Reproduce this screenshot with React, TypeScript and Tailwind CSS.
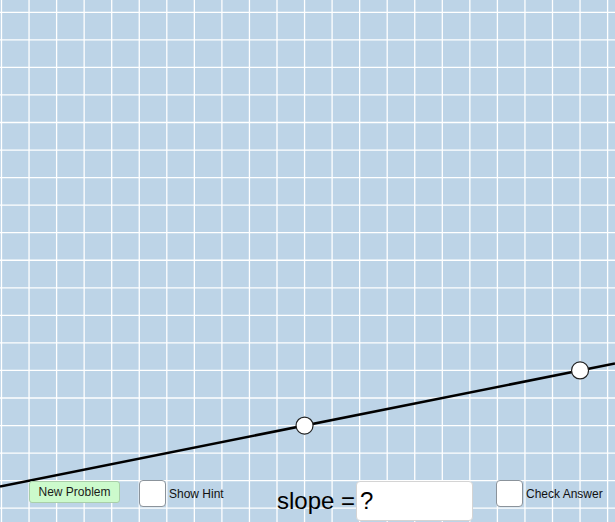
import React from "react";

const W = 615;
const H = 522;
const STEP = 27.55;
const X0 = 1.5;
const Y0 = 12.3;

// grid positions in pixels
const xs: number[] = [];
for (let x = X0; x < W; x += STEP) xs.push(x);
const ys: number[] = [];
for (let y = Y0; y < H; y += STEP) ys.push(y);

const P = { x: X0 + STEP * 11, y: Y0 + STEP * 15 };
const Q = { x: X0 + STEP * 21, y: Y0 + STEP * 13 };
const m = (Q.y - P.y) / (Q.x - P.x);

const Graph = () => (
  <svg width={W} height={H} className="absolute inset-0">
    {xs.map((x) => (
      <line key={`v${x}`} x1={x} y1={0} x2={x} y2={H} stroke="#ffffff" strokeWidth={1.3} />
    ))}
    {ys.map((y) => (
      <line key={`h${y}`} x1={0} y1={y} x2={W} y2={y} stroke="#ffffff" strokeWidth={1.3} />
    ))}
    <line
      x1={0}
      y1={P.y - m * P.x}
      x2={W}
      y2={P.y + m * (W - P.x)}
      stroke="#000000"
      strokeWidth={2.6}
    />
    {[P, Q].map((p, i) => (
      <circle key={i} cx={p.x} cy={p.y} r={8.5} fill="#ffffff" stroke="#222222" strokeWidth={1.2} />
    ))}
  </svg>
);

const CheckBox = ({ label }: { label: string }) => (
  <div className="flex items-center gap-[3px]">
    <div className="w-[27px] h-[27px] bg-white border-[1.5px] border-[#8b939b] rounded-[4px]" />
    <span className="text-[12px] text-[#111]">{label}</span>
  </div>
);

export default function App() {
  return (
    <div
      className="relative w-[615px] h-[522px] overflow-hidden bg-[#bdd4e7]"
      style={{ fontFamily: '"Liberation Sans", Arial, sans-serif' }}
    >
      <Graph />

      {/* controls along the bottom of the board */}
      <div className="absolute left-0 top-[480px] w-full flex items-start">
        <button className="ml-[29px] mt-[1px] w-[91px] h-[22px] bg-[#ccfacc] border border-[#a9cfa9] rounded-[3px] text-[12px] text-[#1a1a1a] leading-none">
          New Problem
        </button>

        <div className="ml-[19px] w-[138px]">
          <CheckBox label="Show Hint" />
        </div>

        <span className="mt-[9px] w-[79px] text-[24px] leading-[24px] text-black whitespace-nowrap">
          slope =
        </span>

        <div className="mt-[1px] w-[117px] h-[40px] bg-white border border-[#d4d4d4] rounded-[4px] pl-[3px] pt-[7px]">
          <span className="text-[24px] leading-[24px] text-black">?</span>
        </div>

        <div className="ml-[23px]">
          <CheckBox label="Check Answer" />
        </div>
      </div>
    </div>
  );
}
